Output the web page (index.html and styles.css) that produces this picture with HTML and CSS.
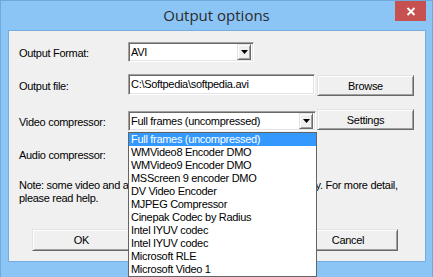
FILE: index.html
```html
<!DOCTYPE html>
<html lang="en">
<head>
    <meta charset="UTF-8">
    <title>Output options</title>
    <link rel="stylesheet" href="styles.css">
</head>
<body>
    <div class="window">
        <div class="titlebar">
            <span class="title">Output options</span>
            <button class="close" type="button">
                <svg width="10" height="9" viewBox="0 0 10 9"><path d="M1.5 1 L8.5 8 M8.5 1 L1.5 8" stroke="#fff" stroke-width="1.9" fill="none"/></svg>
            </button>
        </div>

        <div class="client">
            <div class="row row-format">
                <label>Output Format:</label>
                <div class="combo combo-short">
                    <span class="combo-text">AVI</span>
                    <span class="combo-btn"><svg width="7" height="4" viewBox="0 0 7 4"><path d="M0 0 H7 L3.5 4 Z" fill="#000"/></svg></span>
                </div>
            </div>

            <div class="row row-file">
                <label>Output file:</label>
                <div class="edit">C:\Softpedia\softpedia.avi</div>
                <button class="btn btn-side" type="button">Browse</button>
            </div>

            <div class="row row-video">
                <label>Video compressor:</label>
                <div class="combo-wrap">
                    <div class="combo combo-long">
                        <span class="combo-text">Full frames (uncompressed)</span>
                        <span class="combo-btn"><svg width="7" height="4" viewBox="0 0 7 4"><path d="M0 0 H7 L3.5 4 Z" fill="#000"/></svg></span>
                    </div>
                    <ul class="droplist">
                        <li class="selected">Full frames (uncompressed)</li>
                        <li>WMVideo8 Encoder DMO</li>
                        <li>WMVideo9 Encoder DMO</li>
                        <li>MSScreen 9 encoder DMO</li>
                        <li>DV Video Encoder</li>
                        <li>MJPEG Compressor</li>
                        <li>Cinepak Codec by Radius</li>
                        <li>Intel IYUV codec</li>
                        <li>Intel IYUV codec</li>
                        <li>Microsoft RLE</li>
                        <li>Microsoft Video 1</li>
                    </ul>
                </div>
                <button class="btn btn-side btn-settings" type="button">Settings</button>
            </div>

            <div class="row row-audio">
                <label>Audio compressor:</label>
                <div class="combo combo-long">
                    <span class="combo-text"></span>
                    <span class="combo-btn"><svg width="7" height="4" viewBox="0 0 7 4"><path d="M0 0 H7 L3.5 4 Z" fill="#000"/></svg></span>
                </div>
            </div>

            <p class="note">Note: some video and audio compressors might not work properly. For more detail,<br>please read help.</p>

            <div class="actions">
                <button class="btn btn-wide" type="button">OK</button>
                <button class="btn btn-wide btn-cancel" type="button">Cancel</button>
            </div>
        </div>
    </div>
</body>
</html>
```

FILE: styles.css
```css
body {
    margin: 0;
    width: 433px;
    height: 277px;
    overflow: hidden;
    font-family: "Liberation Sans", Arial, sans-serif;
    font-size: 11px;
    letter-spacing: -0.3px;
    color: #000;
}

/* window frame */
.window {
    position: relative;
    box-sizing: border-box;
    width: 433px;
    height: 277px;
    background-color: #8bc5f6;
    border: 1px solid #6fa9dc;
    border-bottom: none;
}

.titlebar {
    height: 29px;
    display: flex;
    align-items: center;
    justify-content: center;
}

.title {
    font-family: "Open Sans", "Noto Sans", sans-serif;
    font-size: 15px;
    letter-spacing: 0;
    color: #2b2b2b;
    margin-top: -1px;
}

.close {
    position: absolute;
    top: 0;
    right: 6px;
    width: 31px;
    height: 20px;
    padding: 0;
    border: none;
    background-color: #c75050;
    display: flex;
    align-items: center;
    justify-content: center;
}

/* client area */
.client {
    box-sizing: border-box;
    width: 418px;
    height: 232px;
    margin-left: 7px;
    padding: 11px 0 0 10px;
    background-color: #f0f0f0;
    border: 1px solid #76acde;
}

.row {
    display: flex;
    align-items: flex-start;
}

.row label {
    width: 109px;
    flex-shrink: 0;
}

.row-format {
    height: 20px;
}

.row-format label {
    line-height: 22px;
}

.row-file {
    margin-top: 12px;
    height: 22px;
}

.row-file label {
    line-height: 24px;
}

.row-video {
    margin-top: 13px;
    height: 22px;
}

.row-video label {
    line-height: 26px;
}

.row-audio {
    margin-top: 14px;
    height: 20px;
}

.row-audio label {
    line-height: 21px;
}

/* sunken fields */
.combo, .edit {
    box-sizing: border-box;
    background: #fff;
    border: 1px solid;
    border-color: #a0a0a0 #fff #fff #a0a0a0;
    box-shadow: inset 1px 1px #696969, inset -1px -1px #e3e3e3;
}

.combo {
    position: relative;
    height: 20px;
    display: flex;
    align-items: center;
}

.combo-text {
    flex: 1;
    padding-left: 2px;
    white-space: nowrap;
    overflow: hidden;
}

.combo-short {
    width: 126px;
}

.combo-long {
    width: 188px;
}

.combo-btn {
    box-sizing: border-box;
    width: 14px;
    height: 16px;
    margin-right: 2px;
    background: #f0f0f0;
    border: 1px solid;
    border-color: #e3e3e3 #696969 #696969 #e3e3e3;
    box-shadow: inset 1px 1px #fff, inset -1px -1px #a0a0a0;
    display: flex;
    align-items: center;
    justify-content: center;
}

.edit {
    width: 187px;
    height: 21px;
    padding-left: 2px;
    line-height: 19px;
    white-space: nowrap;
}

.combo-wrap {
    position: relative;
    margin-top: 2px;
}

/* the open dropdown list */
.droplist {
    position: absolute;
    top: 21px;
    left: 0;
    z-index: 5;
    box-sizing: border-box;
    width: 189px;
    margin: 0;
    padding: 0;
    list-style: none;
    background: #fff;
    border: 1px solid #646464;
}

.droplist li {
    height: 13px;
    line-height: 13px;
    padding-left: 2px;
    white-space: nowrap;
}

.droplist li.selected {
    background-color: #3399ff;
    color: #fff;
}

/* raised buttons */
.btn {
    box-sizing: border-box;
    padding: 0;
    font-family: "Liberation Sans", Arial, sans-serif;
    font-size: 11px;
    letter-spacing: -0.3px;
    color: #000;
    background: #f0f0f0;
    border: 1px solid;
    border-color: #e3e3e3 #696969 #696969 #e3e3e3;
    box-shadow: inset 1px 1px #fff, inset -1px -1px #a0a0a0;
}

.btn-side {
    width: 97px;
    height: 21px;
    margin-left: 2px;
    margin-top: 1px;
}

.btn-settings {
    margin-left: 1px;
    margin-top: 0;
}

.note {
    margin: 14px 0 0 0;
    line-height: 13px;
    white-space: nowrap;
}

.actions {
    display: flex;
    margin-top: 24px;
    padding-left: 13px;
}

.btn-wide {
    width: 99px;
    height: 22px;
}

.btn-cancel {
    width: 100px;
    margin-left: 167px;
}
```
